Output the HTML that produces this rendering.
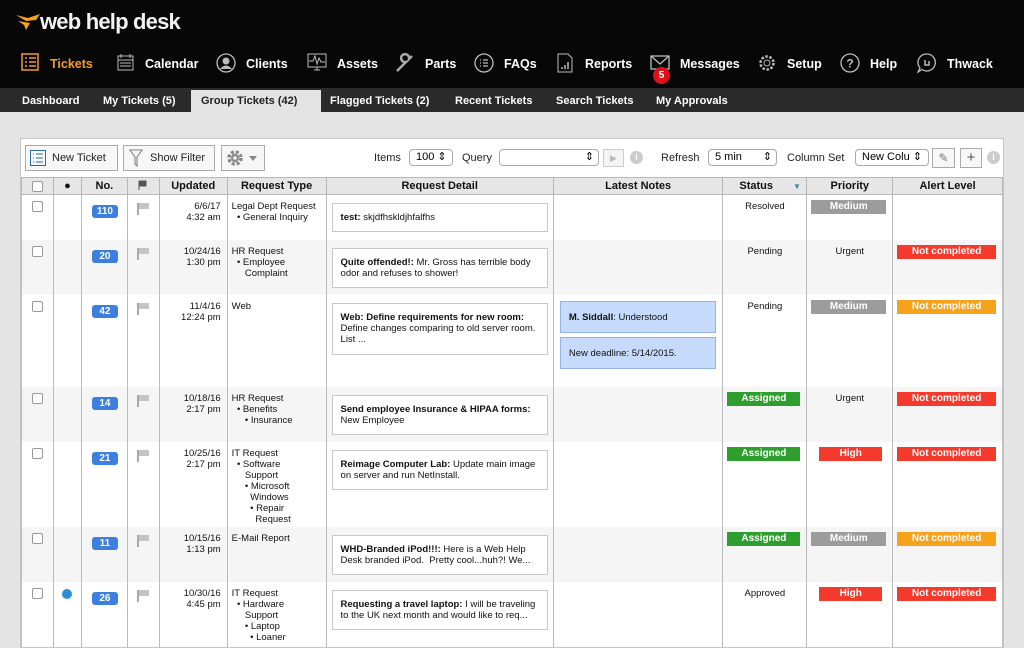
<!DOCTYPE html>
<html><head><meta charset="utf-8"><style>
*{box-sizing:border-box;margin:0;padding:0}
body{width:1024px;height:640px;overflow:hidden;background:#e4e4e4;font-family:"Liberation Sans",Arial,sans-serif;position:relative}
.hdr{position:absolute;left:0;top:0;width:1024px;height:88px;background:#070707}
.logo{position:absolute;left:40px;top:9px;color:#f2f2f2;font-size:22px;font-weight:bold;letter-spacing:-0.8px}
.nav{position:absolute;top:57px;color:#fff;font-size:12.5px;font-weight:bold}
.ic{position:absolute;top:53px}
.sub{position:absolute;left:0;top:88px;width:1024px;height:24px;background:#2a2a2a}
.st{position:absolute;top:95px;color:#fff;font-size:11px;font-weight:bold}
.tab{position:absolute;left:191px;top:90px;width:130px;height:22px;background:#e4e4e4}
.panel{position:absolute;left:20px;top:138px;width:984px;height:510px;background:#fff;border:1px solid #c6c6c6;overflow:hidden}
.btn{position:absolute;top:6px;height:26px;border:1px solid #aaa;background:#f7f7f7;font-size:11px;color:#222;line-height:24px}
.lbl{position:absolute;top:13px;font-size:11px;color:#222}
.sel{position:absolute;top:10px;height:17px;border:1px solid #aaa;border-radius:4px;background:#fff;font-size:11px;line-height:15px;padding-left:6px}
table{position:absolute;left:0;top:38px;border-collapse:collapse;table-layout:fixed;font-size:9.5px;color:#111}
th{height:17px;background:#e6e6e6;border:1px solid #b8b8b8;font-size:11px;font-weight:bold;color:#111;white-space:nowrap;overflow:hidden}
td{border-left:1px solid #bbb;border-right:1px solid #bbb;vertical-align:top;line-height:11px}
tr.e td{background:#f5f5f5}
.cb{width:11px;height:11px;border:1px solid #999;border-radius:2px;margin:6px 0 0 10px;background:#fff}
.no{display:inline-block;background:#3d7fde;color:#fff;font-weight:bold;font-size:10px;border-radius:3px;padding:1px 0;width:26px;text-align:center;margin:10px 0 0 10px}
.fl{margin:8px 0 0 9px;width:14px;height:12px;border-left:2px solid #aaa;position:relative}
.fl:after{content:"";position:absolute;left:0;top:0;width:10px;height:6px;background:#c4c4c4}
.up{text-align:right;padding:6px 6px 0 0}
.rt{padding:6px 0 0 4px}
.box{margin:8px 5px 0 5px;border:1px solid #c8c8c8;padding:8px;background:#fff;min-height:30px}
.note{margin:6px 6px 0 6px;background:#c6dafc;border:1px solid #93b2e6;padding:10px 8px;height:32px;position:relative}
.st2{text-align:center;padding-top:6px}
.badge{display:block;margin:5px 6px 0 4px;color:#fff;font-weight:bold;text-align:center;font-size:10px;height:14px;line-height:14px}
.g{background:#2e9e2e}.m{background:#9c9c9c}.r{background:#f33a2d}.o{background:#f6a21a}
</style></head><body>
<div class="hdr">
<svg style="position:absolute;left:14px;top:12px" width="28" height="20" viewBox="0 0 28 20"><path d="M2 3 L14 6 L26 2 L22 8 L12 9 Z" fill="#f7a21b"/><path d="M4 9 L16 11 L12 18 L10 13 Z" fill="#f7a21b"/></svg>
<div class="logo">web help desk</div>
<svg class="ic" style="left:21px" width="18" height="18"><rect x="1" y="1" width="16" height="16" fill="none" stroke="#f39c2b" stroke-width="1.5"/><path d="M4 5h2M8 5h7M4 9h2M8 9h7M4 13h2M8 13h7" stroke="#f39c2b" stroke-width="1.5"/></svg>
<div class="nav" style="left:50px;color:#f39c2b">Tickets</div>
<svg class="ic" style="left:117px" width="17" height="18"><rect x="1" y="3" width="15" height="14" fill="none" stroke="#bbb"/><path d="M1 7h15M4 1v4M13 1v4M3 10h11M3 13h11" stroke="#bbb"/></svg>
<div class="nav" style="left:145px">Calendar</div>
<svg class="ic" style="left:216px;top:53px" width="20" height="20"><circle cx="10" cy="10" r="9" fill="none" stroke="#bbb" stroke-width="1.3"/><circle cx="10" cy="8" r="3.5" fill="#bbb"/><path d="M4 16 Q10 9 16 16Z" fill="#bbb"/></svg>
<div class="nav" style="left:246px">Clients</div>
<svg class="ic" style="left:307px" width="20" height="18"><rect x="1" y="1" width="18" height="13" fill="none" stroke="#bbb"/><path d="M2 8h4l2-5 2 8 2-6 2 4h4M7 17h6M10 14v3" stroke="#bbb" fill="none"/></svg>
<div class="nav" style="left:337px">Assets</div>
<svg class="ic" style="left:395px" width="20" height="20"><path d="M2 18 L11 9 A4 4 0 1 1 14 6 L17 3" stroke="#aaa" stroke-width="2.5" fill="none"/></svg>
<div class="nav" style="left:425px">Parts</div>
<svg class="ic" style="left:474px" width="20" height="20"><circle cx="10" cy="10" r="9" fill="none" stroke="#bbb" stroke-width="1.3"/><path d="M6 7h1M9 7h5M6 10h1M9 10h5M6 13h1M9 13h5" stroke="#bbb" stroke-width="1.3"/></svg>
<div class="nav" style="left:504px">FAQs</div>
<svg class="ic" style="left:557px" width="16" height="20"><path d="M1 1h10l4 4v14H1z" fill="none" stroke="#bbb"/><path d="M5 16v-2M8 16v-4M11 16v-7" stroke="#bbb" stroke-width="1.5"/></svg>
<div class="nav" style="left:585px">Reports</div>
<svg class="ic" style="left:650px;top:55px" width="20" height="16"><rect x="1" y="1" width="18" height="13" fill="none" stroke="#bbb" stroke-width="1.3"/><path d="M1 1l9 8 9-8" stroke="#bbb" fill="none" stroke-width="1.3"/></svg>
<div style="position:absolute;left:653px;top:67px;width:17px;height:17px;border-radius:50%;background:#e0101a;color:#fff;font-size:10px;font-weight:bold;text-align:center;line-height:17px">5</div>
<div class="nav" style="left:680px">Messages</div>
<svg class="ic" style="left:757px" width="20" height="20"><circle cx="10" cy="10" r="6.5" fill="none" stroke="#bbb" stroke-width="2.5" stroke-dasharray="2.5 1.6"/><circle cx="10" cy="10" r="3" fill="none" stroke="#bbb"/></svg>
<div class="nav" style="left:787px">Setup</div>
<svg class="ic" style="left:840px" width="20" height="20"><circle cx="10" cy="10" r="9" fill="none" stroke="#bbb" stroke-width="1.3"/><text x="10" y="14.5" font-size="12" font-weight="bold" fill="#bbb" text-anchor="middle" font-family="Liberation Sans">?</text></svg>
<div class="nav" style="left:870px">Help</div>
<svg class="ic" style="left:917px" width="20" height="20"><path d="M10 1a8.5 8.5 0 1 1-5 15.5L1 19l2-4A8.5 8.5 0 0 1 10 1z" fill="none" stroke="#bbb" stroke-width="1.3"/><path d="M8 7v5h4V8" stroke="#bbb" stroke-width="1.5" fill="none"/></svg>
<div class="nav" style="left:947px">Thwack</div>
</div>
<div class="sub"></div>
<div class="tab"></div>
<div class="st" style="left:22px">Dashboard</div>
<div class="st" style="left:103px">My Tickets (5)</div>
<div class="st" style="left:201px;color:#222">Group Tickets (42)</div>
<div class="st" style="left:330px">Flagged Tickets (2)</div>
<div class="st" style="left:455px">Recent Tickets</div>
<div class="st" style="left:556px">Search Tickets</div>
<div class="st" style="left:656px">My Approvals</div>

<div class="panel">
<div class="btn" style="left:4px;width:93px;padding-left:26px">New Ticket
<svg style="position:absolute;left:4px;top:4px" width="16" height="16"><rect x="0.5" y="0.5" width="15" height="15" fill="none" stroke="#2b6aa6"/><path d="M3 4h1M6 4h7M3 8h1M6 8h7M3 12h1M6 12h7" stroke="#2b6aa6"/></svg></div>
<div class="btn" style="left:102px;width:92px;padding-left:26px">Show Filter
<svg style="position:absolute;left:5px;top:3px" width="14" height="18"><path d="M1 1h12L8 8v9l-2-2V8z" fill="none" stroke="#777"/></svg></div>
<div class="btn" style="left:200px;width:44px">
<svg style="position:absolute;left:3px;top:3px" width="38" height="18"><circle cx="10" cy="9" r="6" fill="none" stroke="#888" stroke-width="3.5" stroke-dasharray="3 1.8"/><circle cx="10" cy="9" r="4" fill="#888"/><circle cx="10" cy="9" r="1.8" fill="#f7f7f7"/><path d="M24 7h8l-4 5z" fill="#888"/></svg></div>
<div class="lbl" style="left:353px">Items</div>
<div class="sel" style="left:388px;width:44px">100 ⇕</div>
<div class="lbl" style="left:441px">Query</div>
<div class="sel" style="left:478px;width:100px;text-align:right;padding-right:4px">⇕</div>
<div style="position:absolute;left:582px;top:10px;width:21px;height:18px;border:1px solid #ccc;background:#f4f4f4;color:#bbb;font-size:9px;text-align:center;line-height:16px">▶</div>
<div style="position:absolute;left:609px;top:12px;width:13px;height:13px;border-radius:50%;background:#ccc;color:#fff;font-size:9px;font-weight:bold;text-align:center;line-height:13px">i</div>
<div class="lbl" style="left:640px">Refresh</div>
<div class="sel" style="left:687px;width:69px">5 min <span style="float:right;padding-right:4px">⇕</span></div>
<div class="lbl" style="left:766px">Column Set</div>
<div class="sel" style="left:834px;width:74px;overflow:hidden;white-space:nowrap">New Colu ⇕</div>
<div style="position:absolute;left:911px;top:9px;width:23px;height:20px;border:1px solid #aaa;background:#f7f7f7;color:#777;text-align:center;font-size:12px;line-height:18px">✎</div>
<div style="position:absolute;left:939px;top:9px;width:22px;height:20px;border:1px solid #aaa;background:#f7f7f7;color:#555;text-align:center;font-size:15px;line-height:18px">+</div>
<div style="position:absolute;left:966px;top:12px;width:13px;height:13px;border-radius:50%;background:#ccc;color:#fff;font-size:9px;font-weight:bold;text-align:center;line-height:13px">i</div>

<table>
<colgroup><col style="width:32px"><col style="width:28px"><col style="width:46px"><col style="width:32px"><col style="width:68px"><col style="width:99px"><col style="width:228px"><col style="width:170px"><col style="width:84px"><col style="width:86px"><col style="width:110px"></colgroup>
<tr><th><div class="cb" style="margin:0 auto"></div></th><th>●</th><th>No.</th><th><svg width="10" height="10"><path d="M1 1v9M1 1h7v5H1" fill="#555" stroke="#555"/></svg></th><th>Updated</th><th>Request Type</th><th>Request Detail</th><th>Latest Notes</th><th style="text-align:left;padding-left:16px">Status<span style="color:#3c8ca8;font-size:8px;margin-left:20px">▼</span></th><th>Priority</th><th>Alert Level</th></tr>
<tr style="height:45px"><td><div class="cb"></div></td><td></td><td><span class="no">110</span></td><td><div class="fl"></div></td><td class="up">6/6/17<br>4:32 am</td><td class="rt">Legal Dept Request<br>&nbsp;&nbsp;• General Inquiry</td><td><div class="box" style="min-height:29px"><b>test:</b> skjdfhskldjhfalfhs</div></td><td></td><td class="st2">Resolved</td><td><span class="badge m">Medium</span></td><td></td></tr>
<tr class="e" style="height:55px"><td><div class="cb"></div></td><td></td><td><span class="no">20</span></td><td><div class="fl"></div></td><td class="up">10/24/16<br>1:30 pm</td><td class="rt">HR Request<br>&nbsp;&nbsp;• Employee<br>&nbsp;&nbsp;&nbsp;&nbsp;&nbsp;Complaint</td><td><div class="box"><b>Quite offended!:</b> Mr. Gross has terrible body odor and refuses to shower!</div></td><td></td><td class="st2">Pending</td><td class="st2">Urgent</td><td><span class="badge r">Not completed</span></td></tr>
<tr style="height:92px"><td><div class="cb"></div></td><td></td><td><span class="no">42</span></td><td><div class="fl"></div></td><td class="up">11/4/16<br>12:24 pm</td><td class="rt">Web</td><td><div class="box" style="min-height:52px"><b>Web: Define requirements for new room:</b> Define changes comparing to old server room. List ...</div></td><td><div class="note"><b>M. Siddall</b>: Understood</div><div class="note" style="margin-top:4px">New deadline: 5/14/2015.</div></td><td class="st2">Pending</td><td><span class="badge m">Medium</span></td><td><span class="badge o">Not completed</span></td></tr>
<tr class="e" style="height:55px"><td><div class="cb"></div></td><td></td><td><span class="no">14</span></td><td><div class="fl"></div></td><td class="up">10/18/16<br>2:17 pm</td><td class="rt">HR Request<br>&nbsp;&nbsp;• Benefits<br>&nbsp;&nbsp;&nbsp;&nbsp;&nbsp;• Insurance</td><td><div class="box"><b>Send employee Insurance &amp; HIPAA forms:</b> New Employee</div></td><td></td><td><span class="badge g">Assigned</span></td><td class="st2">Urgent</td><td><span class="badge r">Not completed</span></td></tr>
<tr style="height:85px"><td><div class="cb"></div></td><td></td><td><span class="no">21</span></td><td><div class="fl"></div></td><td class="up">10/25/16<br>2:17 pm</td><td class="rt">IT Request<br>&nbsp;&nbsp;• Software<br>&nbsp;&nbsp;&nbsp;&nbsp;&nbsp;Support<br>&nbsp;&nbsp;&nbsp;&nbsp;&nbsp;• Microsoft<br>&nbsp;&nbsp;&nbsp;&nbsp;&nbsp;&nbsp;&nbsp;Windows<br>&nbsp;&nbsp;&nbsp;&nbsp;&nbsp;&nbsp;&nbsp;• Repair<br>&nbsp;&nbsp;&nbsp;&nbsp;&nbsp;&nbsp;&nbsp;&nbsp;&nbsp;Request</td><td><div class="box"><b>Reimage Computer Lab:</b> Update main image on server and run NetInstall.</div></td><td></td><td><span class="badge g">Assigned</span></td><td><span class="badge r" style="margin:5px 10px 0 12px">High</span></td><td><span class="badge r">Not completed</span></td></tr>
<tr class="e" style="height:55px"><td><div class="cb"></div></td><td></td><td><span class="no">11</span></td><td><div class="fl"></div></td><td class="up">10/15/16<br>1:13 pm</td><td class="rt">E-Mail Report</td><td><div class="box"><b>WHD-Branded iPod!!!:</b> Here is a Web Help Desk branded iPod.&nbsp; Pretty cool...huh?! We...</div></td><td></td><td><span class="badge g">Assigned</span></td><td><span class="badge m">Medium</span></td><td><span class="badge o">Not completed</span></td></tr>
<tr style="height:80px"><td><div class="cb"></div></td><td><div style="width:10px;height:10px;border-radius:50%;background:#2b8fd6;margin:7px 0 0 8px"></div></td><td><span class="no">26</span></td><td><div class="fl"></div></td><td class="up">10/30/16<br>4:45 pm</td><td class="rt">IT Request<br>&nbsp;&nbsp;• Hardware<br>&nbsp;&nbsp;&nbsp;&nbsp;&nbsp;Support<br>&nbsp;&nbsp;&nbsp;&nbsp;&nbsp;• Laptop<br>&nbsp;&nbsp;&nbsp;&nbsp;&nbsp;&nbsp;&nbsp;• Loaner</td><td><div class="box"><b>Requesting a travel laptop:</b> I will be traveling to the UK next month and would like to req...</div></td><td></td><td class="st2">Approved</td><td><span class="badge r" style="margin:5px 10px 0 12px">High</span></td><td><span class="badge r">Not completed</span></td></tr>
</table>
</div>
</body></html>
